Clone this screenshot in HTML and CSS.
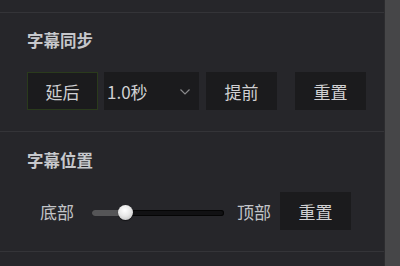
FILE: index.html
```html
<!DOCTYPE html>
<html lang="zh-CN">
<head>
<meta charset="utf-8">
<link rel="stylesheet" href="styles.css">
</head>
<body>
<div class="page">
  <main class="panel">
    <div class="prev"></div>
    <section class="section">
      <h2 class="title">字幕同步</h2>
      <div class="row sync-row">
        <button class="btn btn-active">延后</button>
        <div class="select">
          <span>1.0秒</span>
          <svg class="chev" width="10" height="6" viewBox="0 0 10 6"><polyline points="0.5,0.5 5,5 9.5,0.5" fill="none" stroke="#8a8a8c" stroke-width="1.2"/></svg>
        </div>
        <button class="btn btn-ahead">提前</button>
        <button class="btn btn-reset1">重置</button>
      </div>
    </section>
    <section class="section section-pos">
      <h2 class="title">字幕位置</h2>
      <div class="row pos-row">
        <span class="label">底部</span>
        <div class="slider">
          <div class="track"><div class="fill" style="width:33px"></div></div>
          <div class="thumb" style="left:33px"></div>
        </div>
        <span class="label label-top">顶部</span>
        <button class="btn">重置</button>
      </div>
    </section>
  </main>
  <div class="scrollbar"></div>
</div>
</body>
</html>
```
FILE: styles.css
```css
html, body {
  margin: 0;
  padding: 0;
  background: #26262a;
}
body {
  font-family: "Noto Sans CJK SC", "Noto Sans", sans-serif;
  color: #c8c8ca;
  width: 400px;
  height: 266px;
  overflow: hidden;
}
.page {
  display: flex;
  height: 266px;
}
.panel {
  flex: 1;
  border-right: 1px solid #2c2c2f;
}
.scrollbar {
  width: 15px;
  background: #464648;
}
.prev {
  height: 12px;
  border-bottom: 1px solid #343438;
}
.section {
  padding: 17px 0 21px 27px;
  border-bottom: 1px solid #343438;
}
.section-pos {
  padding-top: 18px;
}
.title {
  margin: 0 0 22px;
  font-size: 16.5px;
  line-height: 20px;
  font-weight: 700;
  color: #c6c8cc;
}
.row {
  display: flex;
  align-items: center;
  height: 38px;
}
.btn {
  width: 71px;
  height: 38px;
  border: none;
  background: #1b1b1d;
  color: #d0d0d2;
  font-family: inherit;
  font-size: 17px;
  padding: 0;
  box-sizing: border-box;
}
.btn-active {
  border: 1px solid #2a3a1c;
}
.select {
  width: 95px;
  height: 38px;
  margin-left: 6px;
  background: #1b1b1d;
  display: flex;
  align-items: center;
  justify-content: space-between;
  padding: 0 9px 0 3px;
  box-sizing: border-box;
  font-size: 17px;
  color: #d0d0d2;
}
.chev {
  display: block;
  margin-top: 1px;
}
.btn-ahead {
  margin-left: 7px;
}
.btn-reset1 {
  margin-left: 18px;
}
.pos-row .label {
  font-size: 17px;
  margin-left: 13px;
  color: #c2c4c8;
}
.pos-row .label-top {
  margin-left: 13px;
  margin-right: 9px;
}
.slider {
  position: relative;
  width: 132px;
  height: 16px;
  margin-left: 18px;
  margin-top: 4px;
}
.track {
  position: absolute;
  left: 0;
  right: 0;
  top: 5px;
  height: 6px;
  border-radius: 3px;
  background: #111113;
  box-shadow: inset 0 0 0 1px #050505;
  overflow: hidden;
}
.fill {
  height: 100%;
  background: #555557;
}
.thumb {
  position: absolute;
  top: 0;
  width: 15px;
  height: 15px;
  margin-left: -7px;
  border-radius: 50%;
  background: radial-gradient(circle at 45% 35%, #ffffff 0%, #e8e8e8 45%, #b8b8b8 100%);
  box-shadow: 0 1px 1px rgba(0,0,0,0.5);
}
```
